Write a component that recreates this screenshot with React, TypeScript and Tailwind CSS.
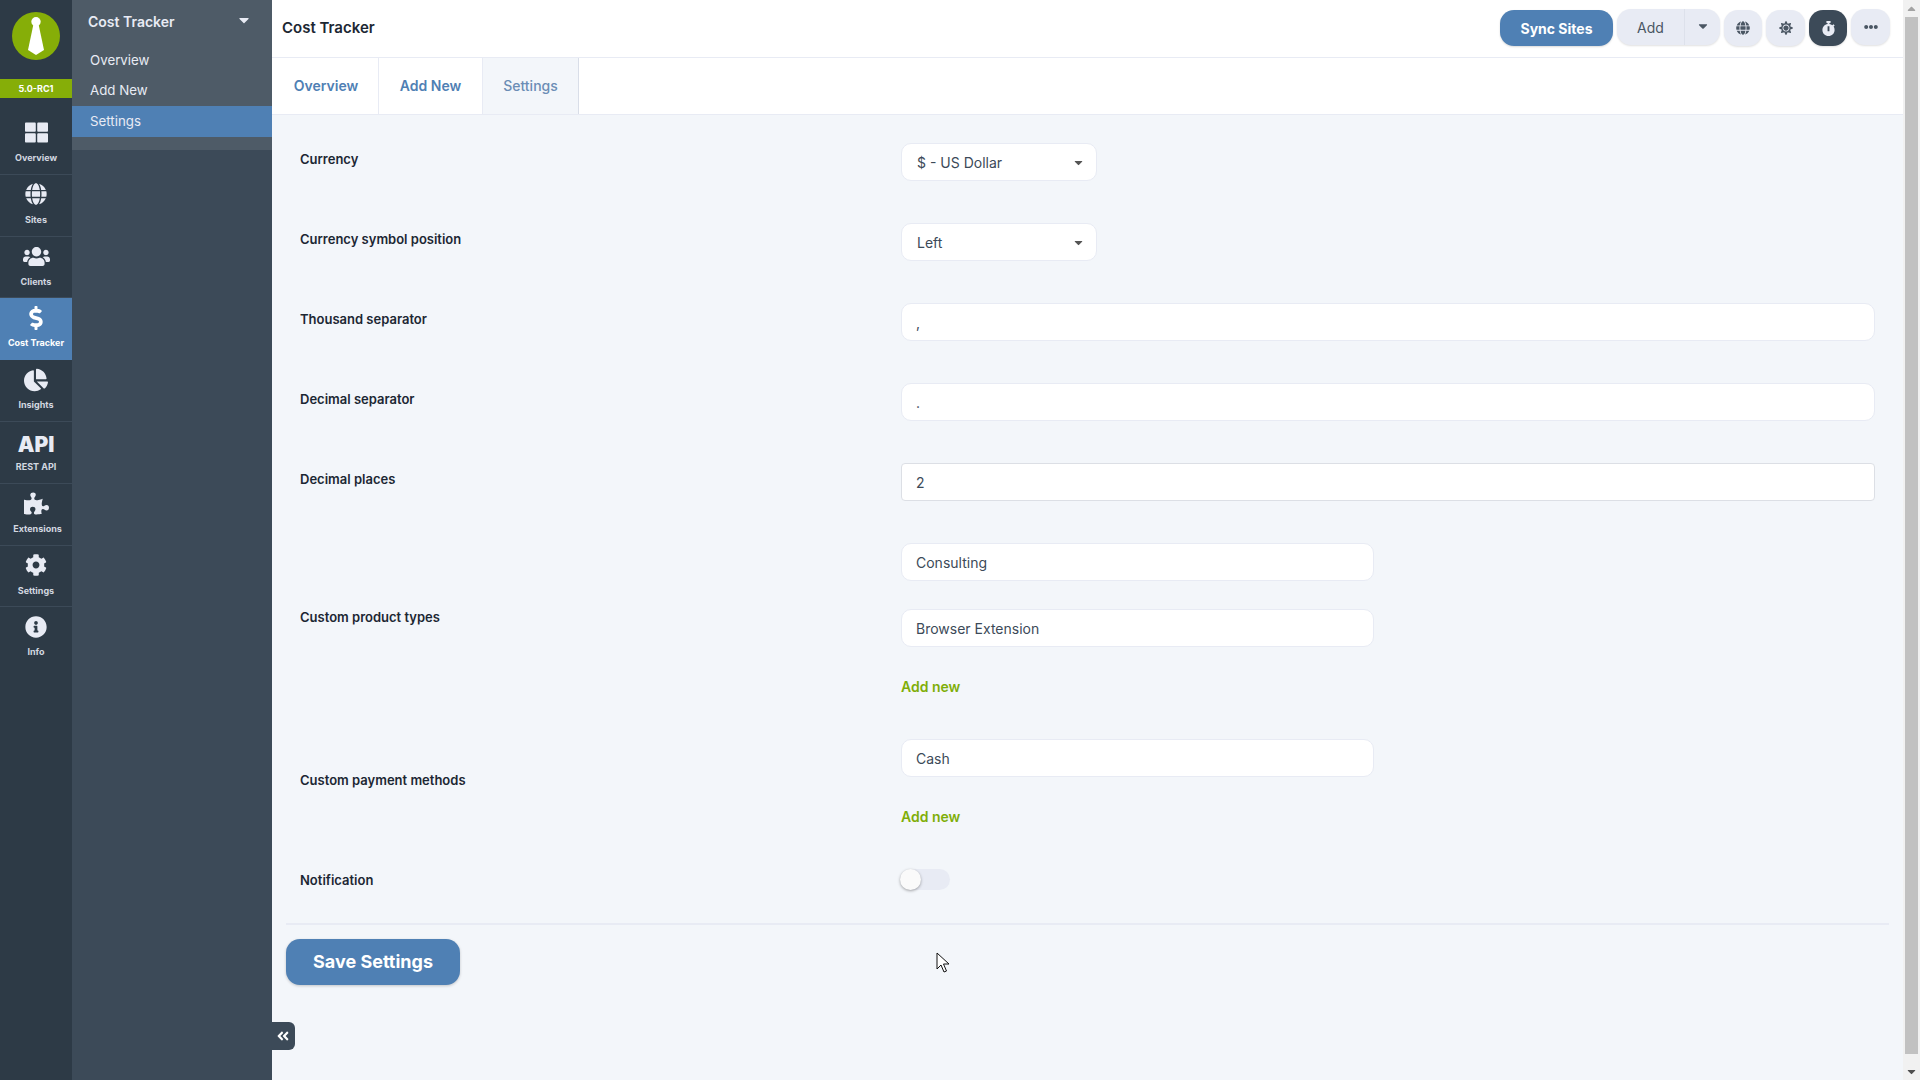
import { FaCaretDown, FaCaretUp, FaChartPie, FaCog, FaDollarSign, FaEllipsisH, FaGlobe, FaInfoCircle, FaPuzzlePiece, FaStopwatch, FaSun, FaThLarge, FaUsers, FaAngleDoubleLeft } from "react-icons/fa";
import type { ReactNode } from "react";

const navItems: { label: string; icon: ReactNode; active?: boolean }[] = [
  { label: "Overview", icon: <FaThLarge className="text-[23px]" /> },
  { label: "Sites", icon: <FaGlobe className="text-[22px]" /> },
  { label: "Clients", icon: <FaUsers className="text-[27px]" /> },
  { label: "Cost Tracker", icon: <FaDollarSign className="text-[24px] text-white" />, active: true },
  { label: "Insights", icon: <FaChartPie className="text-[24px]" /> },
  { label: "REST API", icon: <span className="mt-[6px] text-[21px] leading-[25px] font-black">API</span> },
  { label: "Extensions", icon: <FaPuzzlePiece className="text-[25px]" /> },
  { label: "Settings", icon: <FaCog className="text-[22px]" /> },
  { label: "Info", icon: <FaInfoCircle className="text-[22px]" /> },
];

function Field({ value, mt = "" }: { value: string; mt?: string }) {
  return (
    <div className={`flex h-[38px] items-center rounded-[10px] border border-[#e8ebf4] bg-white px-[14px] text-[14px] text-[#3c4a58] ${mt}`}>
      {value}
    </div>
  );
}

function SelectBox({ value }: { value: string }) {
  return (
    <div className="flex h-[38px] w-[196px] items-center justify-between rounded-[10px] border border-[#e8ebf4] bg-white pl-[15px] pr-[11px] text-[14px] text-[#3c4a58]">
      <span>{value}</span>
      <FaCaretDown className="text-[13px] text-[#555]" />
    </div>
  );
}

function Row({ label, children }: { label: string; children: ReactNode }) {
  return (
    <div className="flex h-[80px] items-start">
      <div className="w-[615px] shrink-0 pl-[14px] pt-[7px] text-[13px] font-semibold text-[#1c2733]">{label}</div>
      <div className="flex-1">{children}</div>
    </div>
  );
}

function IconBtn({ children, dark, narrow }: { children: ReactNode; dark?: boolean; narrow?: boolean }) {
  return (
    <button className={`flex h-[36px] items-center justify-center rounded-[14px] shadow-[0_1px_2px_rgba(0,0,0,0.12)] ${narrow ? "w-[38px]" : "w-[39px]"} ${dark ? "bg-[#3c4a58] text-[#e8ebf4]" : "bg-[#e8ebf4] text-[#4a5663]"}`}>
      {children}
    </button>
  );
}

export default function App() {
  return (
    <div className="flex h-screen overflow-hidden bg-[#f3f6fa] font-['Inter',sans-serif]">
      {/* icon rail */}
      <aside className="flex w-[72px] shrink-0 flex-col bg-[#2d3a46] text-[#e8ebf4]">
        <div className="flex h-[79px] items-start justify-center pt-[12px]">
          <svg width="48" height="48" viewBox="0 0 48 48">
            <circle cx="24" cy="24" r="24" fill="#86ae08" />
            <circle cx="24" cy="9.700" r="4.700" fill="#fff" />
            <path d="M21.500 12h5l5.500 26-8 5-8-5z" fill="#fff" />
          </svg>
        </div>
        <div className="flex h-[19px] items-center justify-center bg-[#86ae08] text-[9px] font-bold text-white">5.0-RC1</div>
        <nav className="mt-[15px] flex flex-col">
          {navItems.map((item) => (
            <div
              key={item.label}
              className={`flex h-[61.8px] flex-col items-center pt-[3.5px] ${item.active ? "bg-[#4f80b4] text-white" : item.label === "Info" ? "" : "border-b border-[#3c4a58]"}`}
            >
              <div className="flex h-[32px] items-center justify-center">{item.icon}</div>
              <div className={`mt-[2.5px] text-[9px] font-bold whitespace-nowrap ${item.active ? "text-white" : "text-[#d3d8e0]"} ${item.label === "Extensions" ? "pl-[3px]" : ""}`}>{item.label}</div>
            </div>
          ))}
        </nav>
      </aside>

      {/* sub menu */}
      <aside className="w-[200px] shrink-0 bg-[#3c4a58] text-[#e8ebf4]">
        <div className="h-[150px] bg-[#4e5b67]">
          <div className="flex h-[45px] items-center justify-between pb-[2px] pl-[16px] pr-[20px]">
            <span className="text-[14px] font-semibold">Cost Tracker</span>
            <FaCaretDown className="mb-[3px] text-[16px]" />
          </div>
          <div className="flex h-[30px] items-center pl-[18px] pt-[1px] text-[13.300px]">Overview</div>
          <div className="flex h-[31px] items-center pl-[18px] text-[13.300px]">Add New</div>
          <div className="flex h-[31px] items-center bg-[#4f80b4] pl-[18px] text-[13.300px]">Settings</div>
        </div>
      </aside>

      {/* main */}
      <main className="relative flex-1 overflow-hidden">
        <header className="flex h-[58px] items-center justify-between border-b border-[#e8ebf4] bg-white pb-[1px] pl-[10px] pr-[13px]">
          <h1 className="text-[15px] font-semibold text-[#1c2733]">Cost Tracker</h1>
          <div className="flex items-center gap-[4px]">
            <button className="flex h-[36px] w-[113px] items-center justify-center rounded-[14px] bg-[#4f80b4] text-[14px] font-bold text-white shadow-[0_1px_2px_rgba(0,0,0,0.15)]">Sync Sites</button>
            <div className="mb-[2px] flex h-[36px] w-[103px] rounded-[14px] bg-[#e8ebf4] text-[#4a5663] shadow-[0_1px_2px_rgba(0,0,0,0.12)]">
              <div className="flex w-[68px] items-center justify-center border-r border-[#dde1eb] text-[14px]">Add</div>
              <div className="flex flex-1 items-center justify-center pb-[2px]"><FaCaretDown className="text-[14px]" /></div>
            </div>
            <IconBtn narrow><FaGlobe className="text-[14px]" /></IconBtn>
            <IconBtn><FaSun className="text-[14px]" /></IconBtn>
            <IconBtn dark narrow><FaStopwatch className="text-[15px]" /></IconBtn>
            <div className="mb-[2px]"><IconBtn><FaEllipsisH className="text-[14px]" /></IconBtn></div>
          </div>
        </header>

        <div className="flex h-[57px] border-b border-[#e8ebf4] bg-white pl-[1px]">
          <div className="flex w-[106px] items-center justify-center border-r border-[#e8ebf4] pb-[1px] pl-[1px] text-[14px] font-semibold text-[#4f80b4]">Overview</div>
          <div className="flex w-[104px] items-center justify-center border-r border-[#e8ebf4] pb-[1px] text-[14px] font-semibold text-[#4f80b4]">Add New</div>
          <div className="flex w-[96px] items-center justify-center border-r border-[#d9dee8] bg-[#f3f6fa] pb-[1px] text-[14px] font-medium text-[#6b8db5]">Settings</div>
        </div>

        <div className="pl-[14px] pr-[28px] pt-[28px]">
          <Row label="Currency"><SelectBox value="$ - US Dollar" /></Row>
          <Row label="Currency symbol position"><SelectBox value="Left" /></Row>
          <Row label="Thousand separator"><Field value="," /></Row>
          <Row label="Decimal separator"><Field value="." /></Row>
          <Row label="Decimal places">
            <div className="flex h-[38px] items-center rounded-[4px] border-[1.5px] border-[#dcdfe5] bg-white px-[14px] text-[14px] text-[#3c4a58]">2</div>
          </Row>
          <div className="flex h-[196px] items-center">
            <div className="w-[615px] shrink-0 pb-[46px] pl-[14px] text-[13px] font-semibold text-[#1c2733]">Custom product types</div>
            <div className="flex w-[473px] flex-col self-start">
              <Field value="Consulting" />
              <Field value="Browser Extension" mt="mt-[28px]" />
              <div className="mt-[29px] text-[14px] font-semibold text-[#7fae08]">Add new</div>
            </div>
          </div>
          <div className="flex h-[130px] items-center">
            <div className="w-[615px] shrink-0 pb-[47px] pl-[14px] text-[13px] font-semibold text-[#1c2733]">Custom payment methods</div>
            <div className="flex w-[473px] flex-col self-start">
              <Field value="Cash" />
              <div className="mt-[29px] text-[14px] font-semibold text-[#7fae08]">Add new</div>
            </div>
          </div>
          <div className="flex h-[54px] items-start">
            <div className="w-[614px] shrink-0 pl-[14px] pt-[2px] text-[13px] font-semibold text-[#1c2733]">Notification</div>
            <div className="relative h-[21px] w-[50px] rounded-full bg-[#e8ebf4]">
              <div className="absolute left-0 top-0 h-[21px] w-[21px] rounded-full bg-[#fafafa] shadow-[0_1px_3px_rgba(0,0,0,0.35)]" />
            </div>
          </div>
        </div>
        <div className="ml-[14px] mr-[14px] h-[2px] bg-[#e8ebf4]" />
        <button className="ml-[14px] mt-[14px] flex h-[46px] w-[174px] items-center justify-center rounded-[14px] bg-[#4f80b4] pb-[2px] text-[18px] font-bold text-white shadow-[0_1px_3px_rgba(0,0,0,0.2)]">Save Settings</button>

        <div className="absolute left-0 top-[1022px] flex h-[28px] w-[23px] items-center justify-center rounded-r-[6px] bg-[#3c4a58] pr-[2px] text-white">
          <FaAngleDoubleLeft className="text-[14px]" />
        </div>
        <svg className="absolute left-[664px] top-[952px]" width="14" height="21" viewBox="0 0 14 21">
          <path d="M1 1v16l4-4 3 7 2.500-1-3-7h5.500z" fill="#fff" stroke="#111" strokeWidth="1" />
        </svg>
      </main>

      {/* page scrollbar */}
      <div className="flex w-[17px] shrink-0 flex-col bg-[#f1f1f1]">
        <div className="flex h-[17px] items-center justify-center pr-[1px] text-[#a3a3a3]"><FaCaretUp className="text-[13px]" /></div>
        <div className="ml-[2px] h-[1037px] w-[13px] bg-[#c1c1c1]" />
        <div className="mt-auto flex h-[17px] items-center justify-center pr-[1px] text-[#505050]"><FaCaretDown className="text-[13px]" /></div>
      </div>
    </div>
  );
}
